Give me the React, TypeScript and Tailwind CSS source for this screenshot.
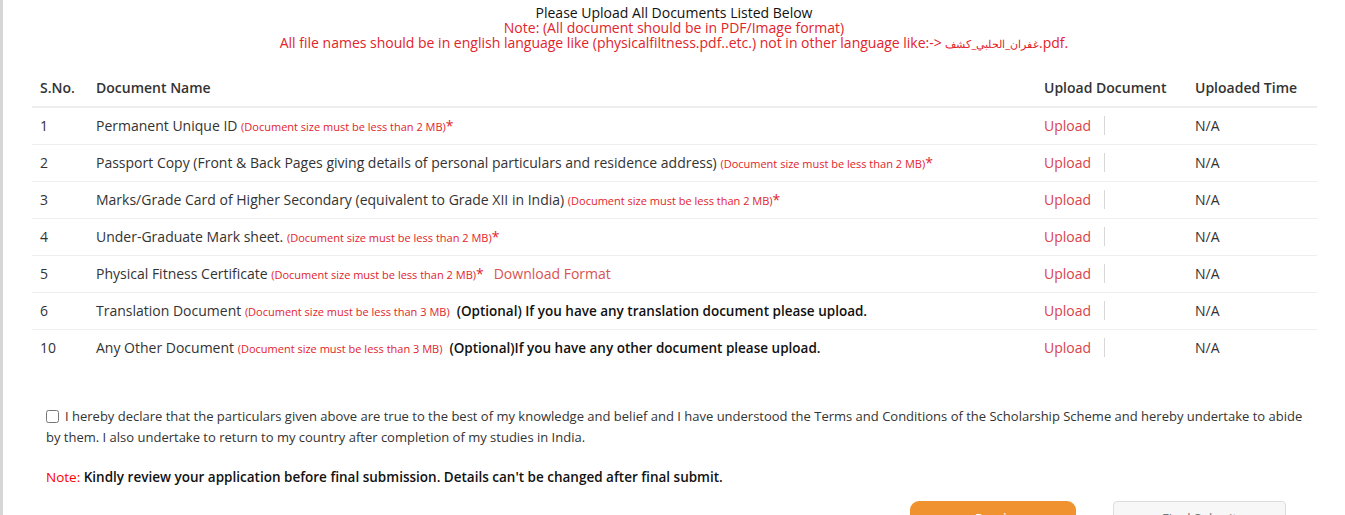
const docs = [
  { no: "1", name: "Permanent Unique ID", size: "2", req: true },
  { no: "2", name: "Passport Copy (Front & Back Pages giving details of personal particulars and residence address)", size: "2", req: true },
  { no: "3", name: "Marks/Grade Card of Higher Secondary (equivalent to Grade XII in India)", size: "2", req: true },
  { no: "4", name: "Under-Graduate Mark sheet.", size: "2", req: true },
  { no: "5", name: "Physical Fitness Certificate", size: "2", req: true, download: true },
  { no: "6", name: "Translation Document", size: "3", optional: "(Optional) If you have any translation document please upload." },
  { no: "10", name: "Any Other Document", size: "3", optional: "(Optional)If you have any other document please upload." },
];

const App = () => {
  return (
    <div className="min-h-[515px] border-l-[3px] border-[#d6d6d6] bg-white font-['Open_Sans',sans-serif] text-[#333]">
      <div className="pt-[5px] text-center text-[14px] leading-[15px]">
        <div className="text-[#111]">Please Upload All Documents Listed Below</div>
        <div className="text-[#e2242b]">Note: (All document should be in PDF/Image format)</div>
        <div className="text-[#e2242b]">
          All file names should be in english language like (physicalfiltness.pdf..etc.) not in other language like:-&gt;{" "}
          <span className="text-[11px]">غفران_الحلبي_كشف</span>.pdf.
        </div>
      </div>

      <div className="mt-[18px] ml-[29px] w-[1285px]">
        <table className="w-full border-collapse text-[14px]">
          <thead>
            <tr className="border-b-2 border-[#eeeeee] text-left">
              <th className="h-[38px] w-[56px] pl-2 font-semibold">S.No.</th>
              <th className="pl-2 font-semibold">Document Name</th>
              <th className="w-[151px] pl-2 font-semibold">Upload Document</th>
              <th className="w-[130px] pl-2 font-semibold">Uploaded Time</th>
            </tr>
          </thead>
          <tbody>
            {docs.map((d, i) => (
              <tr key={d.no} className={i < docs.length - 1 ? "border-b border-[#eeeeee]" : ""}>
                <td className="h-[37px] pl-2">{d.no}</td>
                <td className="pl-2">
                  {d.name}{" "}
                  <span className="text-[11px] text-[#e2242b]">(Document size must be less than {d.size} MB)</span>
                  {d.req && <span className="text-[#e2242b]">*</span>}
                  {d.download && <span className="ml-[10px] text-[#d9534f]">Download Format</span>}
                  {d.optional && (
                    <span className="ml-[7px] text-[13.5px] font-semibold text-[#111]">{d.optional}</span>
                  )}
                </td>
                <td className="pl-2">
                  <div className="flex items-center">
                    <span className="text-[#d9434a]">Upload</span>
                    <span className="ml-[13px] h-[19px] w-px bg-[#d8d8d8]" />
                  </div>
                </td>
                <td className="pl-2">N/A</td>
              </tr>
            ))}
          </tbody>
        </table>
      </div>

      <div className="mt-[40px] pl-[43px] pr-[40px] text-[13px] leading-[21px]">
        <p>
          <input type="checkbox" className="mr-[6px] h-[13px] w-[13px] translate-y-[2px]" />
          I hereby declare that the particulars given above are true to the best of my knowledge and belief and I have understood the Terms and Conditions of the Scholarship Scheme and hereby undertake to abide by them. I also undertake to return to my country after completion of my studies in India.
        </p>
        <p className="mt-[19px] text-[13.5px] font-semibold text-[#111]">
          <span className="font-normal text-[#ff0000]">Note:</span> Kindly review your application before final submission. Details can't be changed after final submit.
        </p>
      </div>

      <div className="mt-[13px] flex justify-end gap-[37px] pr-[59px]">
        <button className="h-[36px] w-[166px] rounded-[9px] bg-[#f0922f] text-[13px] font-semibold text-white">&lt;&lt; Previous</button>
        <button className="h-[36px] w-[173px] rounded-[4px] border border-[#dddddd] bg-[#f7f7f7] text-[13px] text-[#777]">Final Submit</button>
      </div>
    </div>
  );
};

export default App;
